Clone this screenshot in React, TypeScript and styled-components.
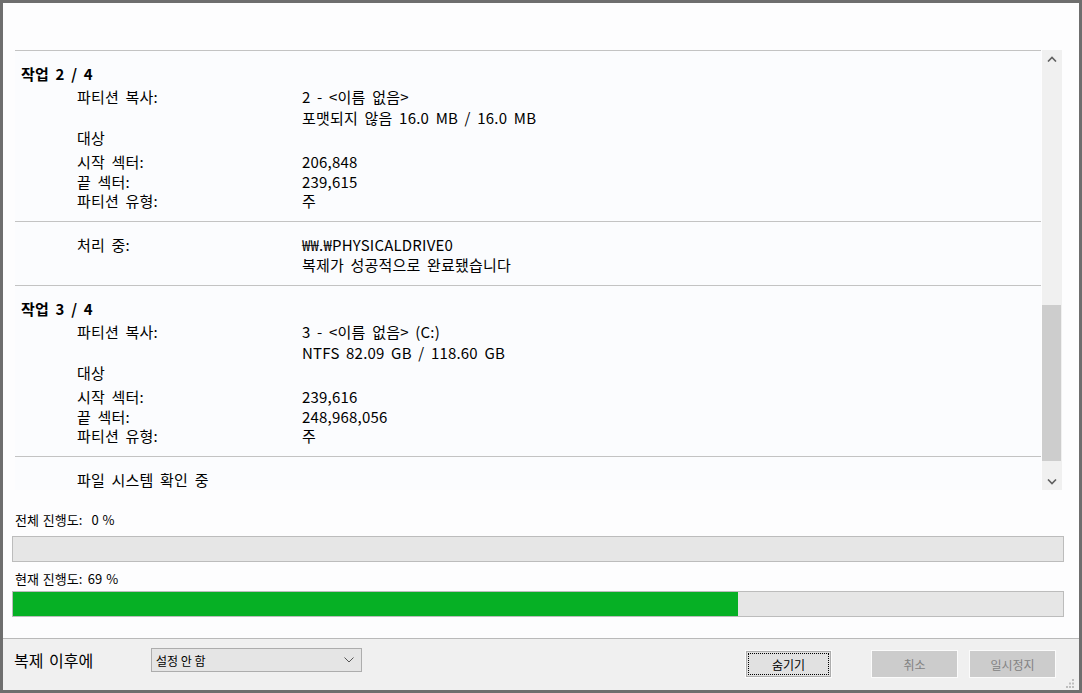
import styled, { createGlobalStyle } from "styled-components";

const GlobalStyle = createGlobalStyle`
  html, body {
    margin: 0;
    padding: 0;
    background: #6e6e6e;
    font-family: "Noto Sans CJK KR", "Noto Sans", sans-serif;
    color: #000;
  }
  * {
    box-sizing: border-box;
  }
`;

const Window = styled.div`
  width: 1076px;
  height: 687px;
  margin: 3px 0 0 3px;
  background: #fdfdfe;
  display: flex;
  flex-direction: column;
  position: relative;
`;

const TopSpace = styled.div`
  height: 47px;
`;

const ListBox = styled.div`
  display: flex;
  height: 440px;
  margin: 0 17px 0 12px;
`;

const ListContent = styled.div`
  flex: 1;
  overflow: hidden;
  background: #fbfcfe;
  margin-right: 1px;
  font-size: 15px;
  word-spacing: 3px;
  letter-spacing: 0.2px;
`;

const Section = styled.div`
  border-top: 1px solid #c3c3c3;
  padding: 13px 0 10px;
`;

const Heading = styled.div`
  line-height: 20px;
  font-weight: 700;
  padding-left: 6px;
`;

const Row = styled.div<{ $gap?: number }>`
  display: grid;
  grid-template-columns: 225px 1fr;
  padding-left: 62px;
  margin-top: ${(p) => p.$gap ?? 0}px;
  line-height: 20px;
  white-space: nowrap;
`;

const Scrollbar = styled.div`
  width: 20px;
  background: #f0f0f0;
  display: flex;
  flex-direction: column;
`;

const ScrollArrow = styled.div`
  height: 17px;
  display: flex;
  align-items: center;
  justify-content: center;
`;

const Track = styled.div`
  flex: 1;
`;

const Thumb = styled.div`
  width: 19px;
  height: 156px;
  margin-top: 238px;
  background: #cdcdcd;
`;

const ProgressLabel = styled.div<{ $gap: number }>`
  display: flex;
  margin: ${(p) => p.$gap}px 0 0 12px;
  font-size: 13px;
  word-spacing: 1px;
  line-height: 16px;
  white-space: nowrap;
`;

const LabelText = styled.span`
  width: 70px;
  flex-shrink: 0;
`;

const Percent = styled.span`
  width: 36px;
  flex-shrink: 0;
  text-align: center;
`;

const Bar = styled.div<{ $gap: number }>`
  width: 1052px;
  height: 26px;
  margin: ${(p) => p.$gap}px 0 0 9px;
  border: 1px solid #bcbcbc;
  background: #e6e6e6;
`;

const Fill = styled.div`
  height: 100%;
  background: #06b025;
`;

const Spacer = styled.div`
  flex: 1;
`;

const Footer = styled.div`
  height: 52px;
  border-top: 1px solid #b9b9b9;
  background: #f0f0f0;
  display: flex;
  align-items: flex-start;
  padding: 0 23px 0 11px;
  position: relative;
`;

const FooterLabel = styled.div`
  width: 137px;
  margin-top: 11px;
  font-size: 16px;
  word-spacing: 2px;
  line-height: 20px;
`;

const Select = styled.div`
  width: 211px;
  height: 24px;
  margin-top: 9px;
  border: 1px solid #adadad;
  background: #e5e5e5;
  display: flex;
  align-items: center;
  justify-content: space-between;
  padding: 0 7px 0 4px;
  font-size: 12px;
`;

const Button = styled.button<{ $focused?: boolean; $space?: number }>`
  width: 87px;
  height: 28px;
  margin-top: 11px;
  margin-right: ${(p) => p.$space ?? 0}px;
  border: 1px solid #fbfbfb;
  background: ${(p) => (p.$focused ? "#e1e1e1" : "#cccccc")};
  color: ${(p) => (p.$focused ? "#000" : "#838383")};
  font-family: inherit;
  font-size: 12px;
  padding: 0;
  outline: ${(p) => (p.$focused ? "1px dotted #000" : "none")};
  outline-offset: -4px;
  box-shadow: ${(p) => (p.$focused ? "inset 0 0 0 1px #adadad" : "none")};
  &:first-of-type {
    margin-left: auto;
  }
`;

const Grip = styled.svg`
  position: absolute;
  right: 4px;
  bottom: 1px;
`;

const Behind = styled.div`
  height: 3px;
  overflow: hidden;
  padding-left: 78px;
  font-size: 14px;
  line-height: 14px;
  color: #1e1e1e;
`;

type Line = { label?: string; value?: string; gap?: number };
type Block = { heading?: string; lines: Line[] };

const blocks: Block[] = [
  {
    heading: "작업 2 / 4",
    lines: [
      { label: "파티션 복사:", value: "2 - <이름 없음>", gap: 3 },
      { value: "포맷되지 않음 16.0 MB / 16.0 MB", gap: 1 },
      { label: "대상" },
      { label: "시작 섹터:", value: "206,848", gap: 4 },
      { label: "끝 섹터:", value: "239,615" },
      { label: "파티션 유형:", value: "주", gap: -1 },
    ],
  },
  {
    lines: [
      { label: "처리 중:", value: "₩₩.₩PHYSICALDRIVE0" },
      { value: "복제가 성공적으로 완료됐습니다" },
    ],
  },
  {
    heading: "작업 3 / 4",
    lines: [
      { label: "파티션 복사:", value: "3 - <이름 없음> (C:)", gap: 3 },
      { value: "NTFS 82.09 GB / 118.60 GB", gap: 1 },
      { label: "대상" },
      { label: "시작 섹터:", value: "239,616", gap: 4 },
      { label: "끝 섹터:", value: "248,968,056" },
      { label: "파티션 유형:", value: "주", gap: -1 },
    ],
  },
  {
    lines: [{ label: "파일 시스템 확인 중" }],
  },
];

function Chevron({ up }: { up?: boolean }) {
  return (
    <svg width="10" height="6" viewBox="0 0 10 6">
      <polyline
        points={up ? "1,5.5 5,1.5 9,5.5" : "1,0.5 5,4.5 9,0.5"}
        fill="none"
        stroke="#606060"
        strokeWidth="1.6"
      />
    </svg>
  );
}

export default function App() {
  const current = 69;
  return (
    <>
      <GlobalStyle />
      <Window>
        <TopSpace />
        <ListBox>
          <ListContent>
            {blocks.map((b, i) => (
              <Section key={i}>
                {b.heading && <Heading>{b.heading}</Heading>}
                {b.lines.map((l, j) => (
                  <Row key={j} $gap={l.gap}>
                    <span>{l.label}</span>
                    <span>{l.value}</span>
                  </Row>
                ))}
              </Section>
            ))}
          </ListContent>
          <Scrollbar>
            <ScrollArrow>
              <Chevron up />
            </ScrollArrow>
            <Track>
              <Thumb />
            </Track>
            <ScrollArrow>
              <Chevron />
            </ScrollArrow>
          </Scrollbar>
        </ListBox>

        <ProgressLabel $gap={22}>
          <LabelText>전체 진행도:</LabelText>
          <Percent>0 %</Percent>
        </ProgressLabel>
        <Bar $gap={8}>
          <Fill style={{ width: "0%" }} />
        </Bar>
        <ProgressLabel $gap={9}>
          <LabelText>현재 진행도:</LabelText>
          <Percent>{current} %</Percent>
        </ProgressLabel>
        <Bar $gap={4}>
          <Fill style={{ width: `${current}%` }} />
        </Bar>
        <Spacer />

        <Footer>
          <FooterLabel>복제 이후에</FooterLabel>
          <Select>
            <span>설정 안 함</span>
            <svg width="10" height="6" viewBox="0 0 10 6">
              <polyline points="0.5,0.5 5,5 9.5,0.5" fill="none" stroke="#555" strokeWidth="1" />
            </svg>
          </Select>
          <Button $focused $space={39}>숨기기</Button>
          <Button $space={11}>취소</Button>
          <Button>일시정지</Button>
          <Grip width="10" height="10" viewBox="0 0 10 10">
            <rect x="7" y="0" width="2" height="2" fill="#bdbdbd" />
            <rect x="4" y="3.5" width="2" height="2" fill="#bdbdbd" />
            <rect x="7" y="3.5" width="2" height="2" fill="#bdbdbd" />
            <rect x="1" y="7" width="2" height="2" fill="#bdbdbd" />
            <rect x="4" y="7" width="2" height="2" fill="#bdbdbd" />
            <rect x="7" y="7" width="2" height="2" fill="#bdbdbd" />
          </Grip>
        </Footer>
      </Window>
      <Behind>239,615</Behind>
    </>
  );
}
